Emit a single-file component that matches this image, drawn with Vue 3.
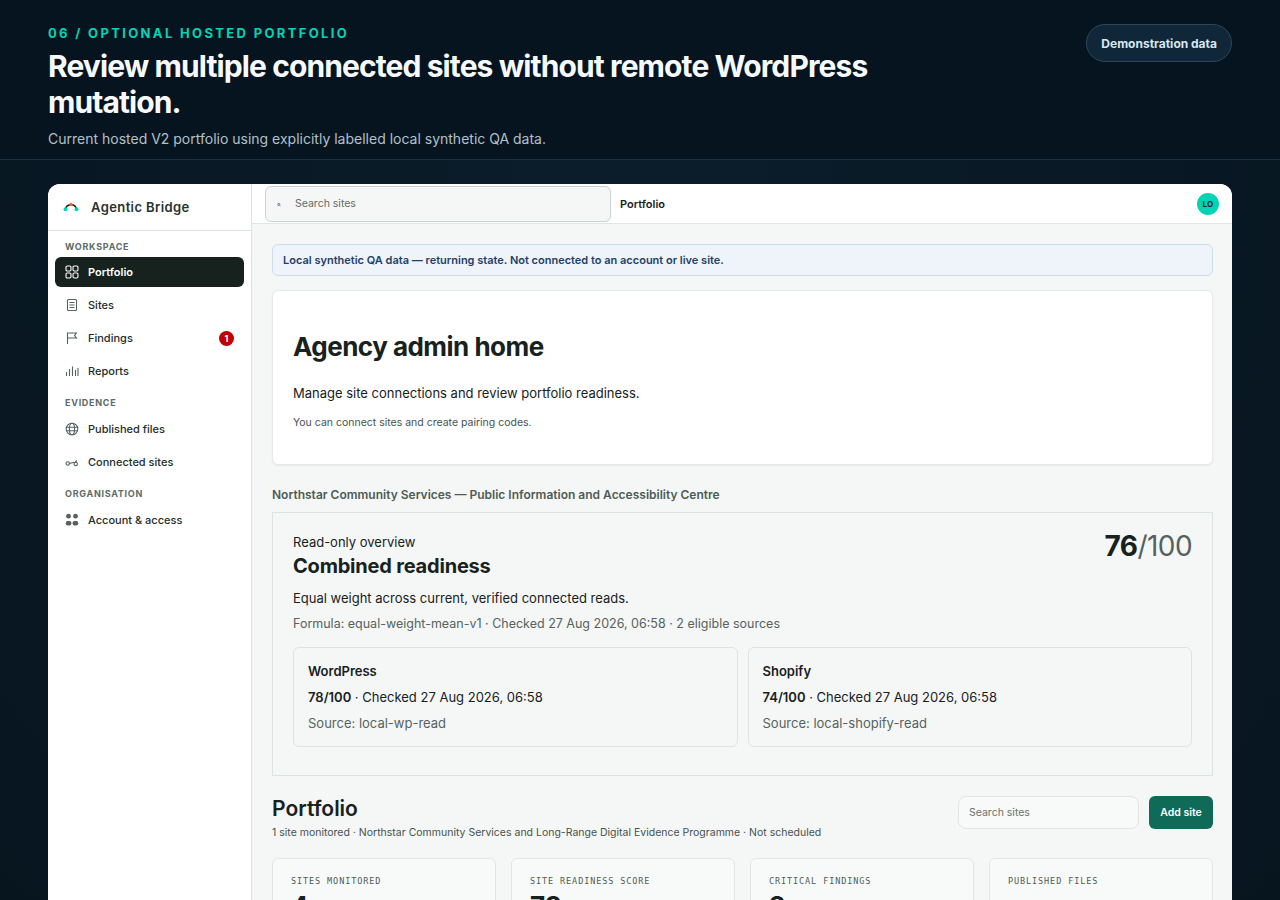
<script setup>
const nav = [
  { heading: 'WORKSPACE', items: [
    { label: 'Portfolio', icon: 'grid', active: true },
    { label: 'Sites', icon: 'doc' },
    { label: 'Findings', icon: 'flag', badge: 1 },
    { label: 'Reports', icon: 'bars' },
  ]},
  { heading: 'EVIDENCE', items: [
    { label: 'Published files', icon: 'globe' },
    { label: 'Connected sites', icon: 'link' },
  ]},
  { heading: 'ORGANISATION', items: [
    { label: 'Account & access', icon: 'people' },
  ]},
]
const sources = [
  { name: 'WordPress', score: '78/100', source: 'Source: local-wp-read' },
  { name: 'Shopify', score: '74/100', source: 'Source: local-shopify-read' },
]
const metrics = [
  { label: 'SITES MONITORED', value: '4' },
  { label: 'SITE READINESS SCORE', value: '78' },
  { label: 'CRITICAL FINDINGS', value: '2' },
  { label: 'PUBLISHED FILES', value: '' },
]
</script>

<template>
  <div class="page">
    <header class="hero">
      <div class="hero-text">
        <p class="eyebrow">06 / OPTIONAL HOSTED PORTFOLIO</p>
        <h1>Review multiple connected sites without remote WordPress mutation.</h1>
        <p class="lede">Current hosted V2 portfolio using explicitly labelled local synthetic QA data.</p>
      </div>
      <span class="pill">Demonstration data</span>
    </header>

    <div class="stage">
      <div class="shell">
        <aside class="sidebar">
          <div class="brand">
            <svg width="16" height="10" viewBox="0 0 16 10" fill="none">
              <path d="M2.5 7.5C3 4.5 5 2.7 8 2.7S13 4.5 13.500 7.500" stroke="#16262a" stroke-width="1.600"/>
              <circle cx="2.500" cy="7.300" r="2" fill="#00d4b4"/>
              <circle cx="13.500" cy="7.300" r="2" fill="#00d4b4"/>
              <circle cx="8" cy="2.400" r="1.700" fill="#f0643c"/>
            </svg>
            <span>Agentic Bridge</span>
          </div>
          <nav class="nav">
            <section v-for="group in nav" :key="group.heading" class="group">
              <h2>{{ group.heading }}</h2>
              <a v-for="item in group.items" :key="item.label" class="nav-item" :class="{ active: item.active }">
                <svg class="nav-icon" width="14" height="14" viewBox="0 0 14 14" fill="none" stroke="currentColor" stroke-width="1.100">
                  <template v-if="item.icon === 'grid'">
                    <rect x="1" y="1" width="5" height="5" rx="1.200"/><rect x="8" y="1" width="5" height="5" rx="1.200"/>
                    <rect x="1" y="8" width="5" height="5" rx="1.200"/><rect x="8" y="8" width="5" height="5" rx="1.200"/>
                  </template>
                  <template v-else-if="item.icon === 'doc'">
                    <rect x="2.500" y="1.500" width="9" height="11" rx="1"/><path d="M4.500 4.500h5M4.500 7h5M4.500 9.500h5"/>
                  </template>
                  <template v-else-if="item.icon === 'flag'">
                    <path d="M2.500 13V2h9L9.500 4.500l2 2.500h-9"/>
                  </template>
                  <template v-else-if="item.icon === 'bars'">
                    <path d="M1.500 8v4M4.500 5v7M7.500 2.500V12M10.500 6v6M13 4v8"/>
                  </template>
                  <template v-else-if="item.icon === 'globe'">
                    <circle cx="7" cy="7" r="5.800"/><ellipse cx="7" cy="7" rx="2.600" ry="5.800"/><path d="M1.200 5.200h11.600M1.200 8.800h11.600"/>
                  </template>
                  <template v-else-if="item.icon === 'link'">
                    <circle cx="2.700" cy="8.500" r="1.700"/><circle cx="10.700" cy="9" r="1.700"/><path d="M4.400 8.500l4.800-1.300M9.500 7.700L12 5.500"/>
                  </template>
                  <template v-else>
                    <g fill="currentColor" stroke="none">
                      <circle cx="3.500" cy="3.200" r="2.400"/><circle cx="10.500" cy="3.200" r="2.400"/>
                      <rect x="0.800" y="8" width="5.600" height="4.500" rx="1.800"/><rect x="7.600" y="8" width="5.600" height="4.500" rx="1.800"/>
                    </g>
                  </template>
                </svg>
                <span class="nav-label">{{ item.label }}</span>
                <span v-if="item.badge" class="badge">{{ item.badge }}</span>
              </a>
            </section>
          </nav>
        </aside>

        <div class="workspace">
          <div class="topbar">
            <div class="top-search">
              <span class="search-glyph">⌕</span>
              <span>Search sites</span>
            </div>
            <strong class="crumb">Portfolio</strong>
            <span class="avatar">LO</span>
          </div>

          <main class="content">
            <div class="notice">Local synthetic QA data — returning state. Not connected to an account or live site.</div>

            <section class="home-card">
              <h2>Agency admin home</h2>
              <p class="home-sub">Manage site connections and review portfolio readiness.</p>
              <p class="home-note">You can connect sites and create pairing codes.</p>
            </section>

            <h3 class="org">Northstar Community Services — Public Information and Accessibility Centre</h3>

            <section class="overview">
              <div class="overview-head">
                <div>
                  <p class="ov-kicker">Read-only overview</p>
                  <h2>Combined readiness</h2>
                </div>
                <div class="score"><b>76</b>/100</div>
              </div>
              <p class="ov-desc">Equal weight across current, verified connected reads.</p>
              <p class="ov-formula">Formula: equal-weight-mean-v1 · Checked 27 Aug 2026, 06:58 · 2 eligible sources</p>
              <div class="sources">
                <article v-for="s in sources" :key="s.name" class="source">
                  <h4>{{ s.name }}</h4>
                  <p class="src-line"><b>{{ s.score }}</b> · Checked 27 Aug 2026, 06:58</p>
                  <p class="src-origin">{{ s.source }}</p>
                </article>
              </div>
            </section>

            <div class="portfolio-head">
              <div>
                <h2>Portfolio</h2>
                <p>1 site monitored · Northstar Community Services and Long-Range Digital Evidence Programme · Not scheduled</p>
              </div>
              <div class="actions">
                <div class="search2">Search sites</div>
                <button class="add">Add site</button>
              </div>
            </div>

            <div class="metrics">
              <article v-for="m in metrics" :key="m.label" class="metric">
                <span class="metric-label">{{ m.label }}</span>
                <strong class="metric-value">{{ m.value }}</strong>
              </article>
            </div>
          </main>
        </div>
      </div>
    </div>
  </div>
</template>

<style>
html, body { margin: 0; background: #06131f; }
</style>

<style scoped>
* { box-sizing: border-box; }
p, h1, h2, h3, h4 { margin: 0; }
.page { height: 900px; overflow: hidden; font-family: Inter, "Liberation Sans", sans-serif; background: #07141f; color: #17211e; }
.hero { height: 160px; padding: 24px 48px 0; display: flex; justify-content: space-between; align-items: flex-start; background: #061420; border-bottom: 1px solid #1d3040; }
.hero-text { width: 860px; }
.eyebrow { font-size: 13px; line-height: 18px; font-weight: 700; letter-spacing: 2.340px; color: #00d4b4; }
h1 { margin-top: 6px; font-size: 30px; line-height: 36px; font-weight: 700; letter-spacing: -0.900px; color: #f7fafc; }
.lede { margin-top: 8px; font-size: 14px; line-height: 21px; color: #b3c0c9; }
.pill { height: 38px; padding: 0 14px; display: flex; align-items: center; border-radius: 19px; background: #0f2739; border: 1px solid #2b475a; font-size: 12px; font-weight: 700; color: #d8e6f1; }
.stage { height: 740px; padding: 24px 48px 0; background: radial-gradient(ellipse at 50% 0%, #0b1d2b 0%, #07151f 100%); }
.shell { height: 760px; display: flex; background: #f5f7f6; border-radius: 12px 12px 0 0; overflow: hidden; }
.sidebar { width: 204px; flex: none; background: #fff; border-right: 1px solid #dde3e2; }
.brand { height: 47px; padding: 0 15px; display: flex; align-items: center; gap: 12px; border-bottom: 1px solid #dde3e2; }
.brand span { font-size: 13px; font-weight: 600; letter-spacing: 0.400px; color: #26312e; }
.nav { padding: 9px 7px; }
.group { margin-bottom: 8px; }
.group h2 { height: 17px; padding-left: 10px; font-size: 9px; line-height: 13px; font-weight: 700; letter-spacing: 0.720px; color: #5c6b67; }
.nav-item { height: 33px; padding: 0 10px; display: flex; align-items: center; gap: 9px; font-size: 11px; font-weight: 500; color: #232d2a; border-radius: 6px; }
.nav-item.active { height: 30px; margin-bottom: 1.500px; background: #17211e; color: #fff; font-weight: 600; border-radius: 6px; }
.nav-icon { flex: none; color: #55625f; }
.active .nav-icon { color: #fff; }
.nav-label { flex: 1; }
.badge { width: 15px; height: 15px; display: flex; align-items: center; justify-content: center; border-radius: 50%; background: #c00000; color: #fff; font-size: 9px; font-weight: 700; }
.workspace { flex: 1; min-width: 0; }
.topbar { height: 40px; padding: 2px 13px 2px 13px; display: flex; align-items: center; background: #fff; border-bottom: 1px solid #e1e6e5; }
.top-search { width: 346px; height: 36px; padding: 0 9px; display: flex; align-items: center; gap: 14px; background: #f5f7f6; border: 1px solid #c9d2d0; border-radius: 6px; font-size: 10.500px; color: #5f6c68; }
.search-glyph { width: 6px; font-size: 8px; line-height: 8px; transform: scaleX(-1); }
.crumb { margin-left: 9px; flex: 1; font-size: 11px; font-weight: 600; color: #17211e; }
.avatar { width: 22px; height: 22px; display: flex; align-items: center; justify-content: center; border-radius: 50%; background: #00d4b4; color: #17211e; font-size: 8px; font-weight: 700; letter-spacing: 0.300px; }
.content { padding: 20px 19px 0 20px; }
.notice { height: 32px; padding: 0 10px; display: flex; align-items: center; background: #eff4fb; border: 1px solid #cbdcef; border-radius: 6px; font-size: 11px; font-weight: 600; color: #1d3f6b; }
.home-card { margin-top: 14px; height: 175px; padding: 40px 20px 0; background: #fff; border: 1px solid #e5e9e8; border-radius: 6px; box-shadow: 0 1px 2px rgba(20, 30, 30, 0.06); }
.home-card h2 { font-size: 26px; line-height: 32px; font-weight: 700; letter-spacing: -0.520px; color: #17211e; }
.home-sub { margin-top: 21px; font-size: 13px; line-height: 18px; color: #17211e; }
.home-note { margin-top: 13px; font-size: 10.500px; line-height: 16px; color: #46524f; }
.org { margin-top: 22px; font-size: 12px; line-height: 16px; font-weight: 600; color: #4d5b57; }
.overview { margin-top: 9px; height: 264px; padding: 16px 20px 0; border: 1px solid #dde3e2; }
.overview-head { display: flex; justify-content: space-between; align-items: flex-start; }
.ov-kicker { margin-top: 4px; font-size: 13px; line-height: 18px; color: #17211e; }
.overview h2 { margin-top: 1px; font-size: 20px; line-height: 28px; font-weight: 700; letter-spacing: -0.200px; color: #17211e; }
.score { font-size: 28px; line-height: 34px; letter-spacing: -0.560px; color: #55625f; }
.score b { font-weight: 700; color: #17211e; }
.ov-desc { margin-top: 9px; font-size: 13px; line-height: 18px; color: #17211e; }
.ov-formula { margin-top: 8px; font-size: 12.500px; line-height: 18px; color: #55625f; }
.sources { margin-top: 14px; display: grid; grid-template-columns: 1fr 1fr; gap: 10px; }
.source { height: 100px; padding: 14px 14px 0; border: 1px solid #dde3e2; border-radius: 6px; }
.source h4 { font-size: 13px; line-height: 18px; font-weight: 600; }
.src-line { margin-top: 8px; font-size: 13px; line-height: 18px; color: #17211e; }
.src-line b { font-weight: 600; }
.src-origin { margin-top: 8px; font-size: 13px; line-height: 18px; color: #55625f; }
.portfolio-head { margin-top: 20px; display: flex; justify-content: space-between; align-items: flex-start; }
.portfolio-head h2 { font-size: 21px; line-height: 26px; font-weight: 600; color: #17211e; }
.portfolio-head p { margin-top: 3px; font-size: 10.500px; line-height: 16px; color: #46524f; }
.actions { display: flex; gap: 10px; }
.search2 { width: 181px; height: 33px; padding: 0 10px; display: flex; align-items: center; background: #f8faf9; border: 1px solid #e1e6e5; border-radius: 8px; font-size: 10.500px; color: #66736f; }
.add { width: 64px; height: 33px; padding: 0; border: 0; background: #0f6b58; color: #fff; border-radius: 6px; font: 600 10.500px Inter, sans-serif; }
.metrics { margin-top: 17px; display: grid; grid-template-columns: repeat(4, 1fr); gap: 15px; }
.metric { height: 120px; padding: 16px 18px; border: 1px solid #e1e6e5; border-radius: 6px; background: #f8faf9; }
.metric-label { display: block; font-family: "DejaVu Sans Mono", "Liberation Mono", monospace; font-size: 8.500px; line-height: 12px; letter-spacing: 0.900px; color: #4d5b57; }
.metric-value { display: block; margin-top: 4px; font-size: 26px; line-height: 30px; font-weight: 700; color: #17211e; }
</style>
